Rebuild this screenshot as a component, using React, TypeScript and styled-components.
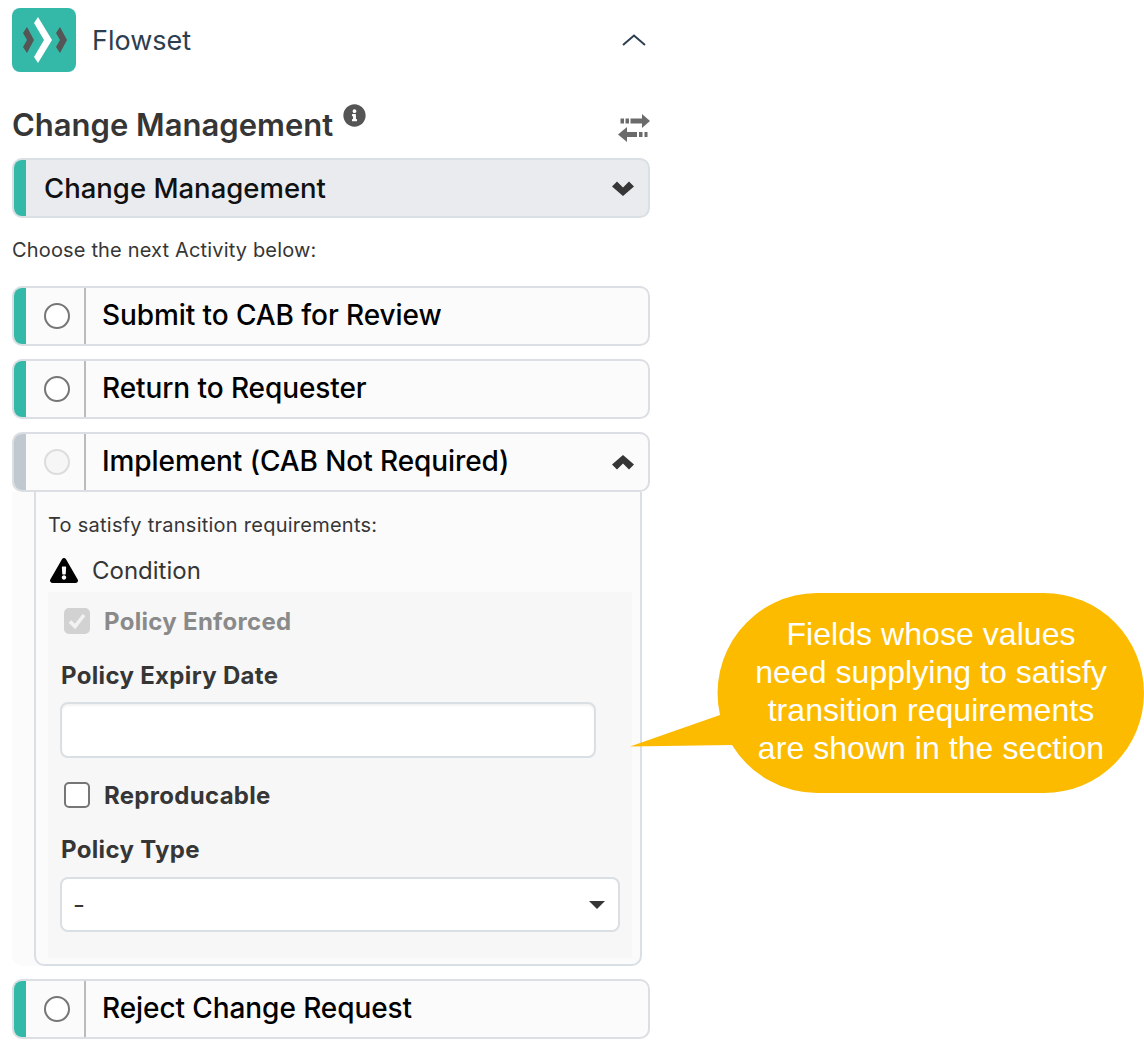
import React from "react";
import styled, { createGlobalStyle } from "styled-components";
import { FaExclamationTriangle, FaInfoCircle } from "react-icons/fa";

const GlobalStyle = createGlobalStyle`
    html, body {
        margin: 0;
        padding: 0;
        background: #fff;
    }
    body {
        font-family: Inter, "Noto Sans", sans-serif;
    }
`;

const Page = styled.div`
    position: relative;
    width: 1144px;
    height: 1048px;
    overflow: hidden;
`;

const Sidebar = styled.div`
    width: 638px;
    margin-left: 12px;
    padding-top: 8px;
    box-sizing: border-box;
`;

const Header = styled.div`
    height: 64px;
    display: flex;
    align-items: center;
    gap: 16px;
`;

const AppName = styled.div`
    flex: 1;
    font-size: 27px;
    color: #2c3e50;
`;

const Collapse = styled.svg`
    width: 24px;
    height: 12px;
    margin-right: 4px;
`;

const TitleRow = styled.div`
    height: 40px;
    margin-top: 32px;
    display: flex;
    align-items: center;
    justify-content: space-between;
`;

const Title = styled.h2`
    margin: 0;
    display: flex;
    font-size: 31px;
    font-weight: 600;
    color: #363636;
    svg {
        width: 23px;
        height: 23px;
        margin: -2px 0 0 10px;
        color: #555;
    }
`;

const Transfer = styled.svg`
    width: 32px;
    height: 28px;
    margin-top: 7px;
`;

const Bar = styled.div<{ $muted?: boolean }>`
    width: 12px;
    flex: none;
    background: ${(p) => (p.$muted ? "#c0c9cf" : "#34b9a8")};
    border-radius: 8px 0 0 8px;
`;

const SelectBox = styled.div`
    height: 60px;
    margin-top: 14px;
    box-sizing: border-box;
    display: flex;
    background: #e9ebee;
    border: 2px solid #dadfe3;
    border-radius: 10px;
`;

const SelectLabel = styled.div`
    flex: 1;
    padding-left: 18px;
    line-height: 57px;
    font-size: 27.5px;
    font-weight: 500;
    color: #111;
`;

const ChevronCell = styled.div`
    width: 50px;
    display: flex;
    align-items: center;
    justify-content: center;
    svg {
        width: 22px;
        height: 15px;
        fill: #363636;
    }
`;

const Hint = styled.div`
    height: 68px;
    line-height: 64px;
    font-size: 20px;
    letter-spacing: 0.16px;
    color: #363636;
`;

const Row = styled.div<{ $gap?: number }>`
    height: 60px;
    margin-bottom: ${(p) => p.$gap ?? 13}px;
    box-sizing: border-box;
    display: flex;
    background: #fbfbfb;
    border: 2px solid #dbdfe3;
    border-radius: 10px;
`;

const RadioCell = styled.div`
    width: 60px;
    flex: none;
    box-sizing: border-box;
    padding-left: 4px;
    display: flex;
    align-items: center;
    justify-content: center;
    border-right: 2px solid #bbb;
`;

const Radio = styled.span<{ $disabled?: boolean }>`
    width: 26px;
    height: 26px;
    box-sizing: border-box;
    border-radius: 50%;
    border: 2px solid ${(p) => (p.$disabled ? "#dcdcdc" : "#767676")};
    background: ${(p) => (p.$disabled ? "#f6f6f6" : "#fff")};
`;

const RowLabel = styled.div`
    flex: 1;
    padding-left: 16px;
    line-height: 54px;
    font-size: 28px;
    font-weight: 500;
    letter-spacing: -0.08px;
    color: #000;
`;

const PanelWrap = styled.div`
    width: 630px;
    height: 474px;
    margin-bottom: 13px;
    padding-left: 22px;
    box-sizing: border-box;
    background: #fbfbfb;
    border-radius: 0 0 10px 10px;
`;

const Panel = styled.div`
    height: 100%;
    box-sizing: border-box;
    padding: 0 8px 6px 12px;
    border: 2px solid #d9dfe4;
    border-top: none;
    border-radius: 0 0 10px 10px;
    background: #fbfbfb;
`;

const PanelHint = styled.div`
    height: 66px;
    line-height: 66px;
    font-size: 20px;
    letter-spacing: 0.25px;
    color: #363636;
`;

const Condition = styled.div`
    height: 34px;
    display: flex;
    align-items: center;
    gap: 14px;
    margin: -5px 0 5px;
    padding-left: 2px;
    font-size: 24px;
    color: #363636;
    svg {
        width: 28px;
        height: 25px;
        color: #000;
    }
`;

const Fields = styled.div`
    height: 366px;
    box-sizing: border-box;
    padding: 16px 12px 0;
    background: #f7f7f7;
`;

const CheckRow = styled.div<{ $top: number; $disabled?: boolean }>`
    height: 26px;
    margin-top: ${(p) => p.$top}px;
    padding-left: 4px;
    display: flex;
    align-items: center;
    gap: 14px;
    font-size: 24px;
    font-weight: 700;
    letter-spacing: 0.3px;
    color: ${(p) => (p.$disabled ? "#8a8a8a" : "#363636")};
`;

const CheckBox = styled.span<{ $disabled?: boolean }>`
    width: 26px;
    height: 26px;
    box-sizing: border-box;
    flex: none;
    display: flex;
    align-items: center;
    justify-content: center;
    border-radius: 5px;
    border: 2px solid ${(p) => (p.$disabled ? "#d2d2d2" : "#767676")};
    background: ${(p) => (p.$disabled ? "#d2d2d2" : "#fff")};
`;

const FieldLabel = styled.div<{ $top: number }>`
    height: 30px;
    line-height: 32px;
    padding-left: 1px;
    margin-top: ${(p) => p.$top}px;
    font-size: 24px;
    font-weight: 700;
    letter-spacing: 0.33px;
    color: #363636;
`;

const TextInput = styled.div`
    width: 536px;
    height: 56px;
    margin-top: 12px;
    box-sizing: border-box;
    background: #fff;
    border: 2px solid #dadfe3;
    border-radius: 8px;
    box-shadow: inset 0 2px 2px rgba(10, 10, 10, 0.05);
`;

const Dropdown = styled.div`
    height: 55px;
    margin-top: 13px;
    box-sizing: border-box;
    padding: 0 13px 0 11px;
    display: flex;
    align-items: center;
    justify-content: space-between;
    background: #fff;
    border: 2px solid #dadfe3;
    border-radius: 8px;
    font-size: 26px;
    color: #363636;
`;

const Caret = styled.span`
    width: 0;
    height: 0;
    border-left: 8px solid transparent;
    border-right: 8px solid transparent;
    border-top: 8px solid #363636;
`;

const Callout = styled.div`
    position: absolute;
    left: 630px;
    top: 593px;
    width: 514px;
    height: 200px;
`;

const CalloutShape = styled.svg`
    position: absolute;
    inset: 0;
    width: 514px;
    height: 200px;
`;

const CalloutText = styled.div`
    position: absolute;
    left: 88px;
    top: 22px;
    width: 426px;
    text-align: center;
    font-family: "Liberation Sans", Arial, sans-serif;
    font-size: 32px;
    letter-spacing: 0.05px;
    line-height: 38px;
    color: #fff;
`;

const Logo = () => (
    <svg width="64" height="64" viewBox="12 8 64 64">
        <rect x="12" y="8" width="64" height="64" rx="8" fill="#34b9a8" />
        <polygon points="23,33 27,27 34,40 27,53 23,47 27,40" fill="#555" />
        <polygon points="56,33 60,27 67,40 60,53 56,47 60,40" fill="#555" />
        <polygon points="34,23 38,17 52,40 38,63 34,57 44,40" fill="#fff" />
    </svg>
);

const TransferIcon = () => (
    <Transfer viewBox="618 113 32 28">
        <g fill="#6b6b6b">
            <rect x="620.5" y="117.5" width="3.5" height="5" />
            <rect x="625.5" y="117.5" width="3.5" height="5" />
            <rect x="630.5" y="117.5" width="11.5" height="5" />
            <polygon points="642,113 650,120 642,127" />
            <polygon points="627,126 618,133.5 627,141" />
            <rect x="627" y="131" width="10" height="5" />
            <rect x="639" y="131" width="3.5" height="5" />
            <rect x="644.5" y="131" width="3" height="5" />
        </g>
    </Transfer>
);

const ChevronDown = () => (
    <svg viewBox="0 0 22 15">
        <polygon points="0,5.5 5,0.5 11,6.5 17,0.5 22,5.5 11,15" />
    </svg>
);

const ChevronUp = () => (
    <svg viewBox="0 0 22 15">
        <polygon points="0,9.5 5,14.5 11,8.5 17,14.5 22,9.5 11,0" />
    </svg>
);

const ActivityRow = ({ label, muted, expanded, gap }: { label: string; muted?: boolean; expanded?: boolean; gap?: number }) => (
    <Row $gap={gap}>
        <Bar $muted={muted} />
        <RadioCell>
            <Radio $disabled={muted} />
        </RadioCell>
        <RowLabel>{label}</RowLabel>
        {expanded && (
            <ChevronCell>
                <ChevronUp />
            </ChevronCell>
        )}
    </Row>
);

export default function App() {
    return (
        <Page>
            <GlobalStyle />
            <Sidebar>
                <Header>
                    <Logo />
                    <AppName>Flowset</AppName>
                    <Collapse viewBox="0 0 24 12">
                        <path d="M1 11 L12 1.5 L23 11" fill="none" stroke="#2c3e50" strokeWidth="2" />
                    </Collapse>
                </Header>
                <TitleRow>
                    <Title>
                        Change Management
                        <FaInfoCircle />
                    </Title>
                    <TransferIcon />
                </TitleRow>
                <SelectBox>
                    <Bar />
                    <SelectLabel>Change Management</SelectLabel>
                    <ChevronCell>
                        <ChevronDown />
                    </ChevronCell>
                </SelectBox>
                <Hint>Choose the next Activity below:</Hint>
                <ActivityRow label="Submit to CAB for Review" />
                <ActivityRow label="Return to Requester" />
                <ActivityRow label="Implement (CAB Not Required)" muted expanded gap={0} />
                <PanelWrap>
                    <Panel>
                        <PanelHint>To satisfy transition requirements:</PanelHint>
                        <Condition>
                            <FaExclamationTriangle />
                            Condition
                        </Condition>
                        <Fields>
                            <CheckRow $top={0} $disabled>
                                <CheckBox $disabled>
                                    <svg width="20" height="18" viewBox="0 0 20 18">
                                        <path d="M3 9.5 L8 14.5 L17 3" fill="none" stroke="#f2f2f2" strokeWidth="3.6" />
                                    </svg>
                                </CheckBox>
                                Policy Enforced
                            </CheckRow>
                            <FieldLabel $top={26}>Policy Expiry Date</FieldLabel>
                            <TextInput />
                            <CheckRow $top={24}>
                                <CheckBox />
                                Reproducable
                            </CheckRow>
                            <FieldLabel $top={26}>Policy Type</FieldLabel>
                            <Dropdown>
                                -
                                <Caret />
                            </Dropdown>
                        </Fields>
                    </Panel>
                </PanelWrap>
                <ActivityRow label="Reject Change Request" />
            </Sidebar>
            <Callout>
                <CalloutShape viewBox="0 0 514 200">
                    <path
                        d="M187 0 H414 A100 100 0 0 1 514 100 A100 100 0 0 1 414 200 H187 A100 100 0 0 1 102 152 L0 153.5 L90 122 A100 100 0 0 1 187 0 Z"
                        fill="#fdbb00"
                    />
                </CalloutShape>
                <CalloutText>
                    Fields whose values
                    <br />
                    need supplying to satisfy
                    <br />
                    transition requirements
                    <br />
                    are shown in the section
                </CalloutText>
            </Callout>
        </Page>
    );
}
